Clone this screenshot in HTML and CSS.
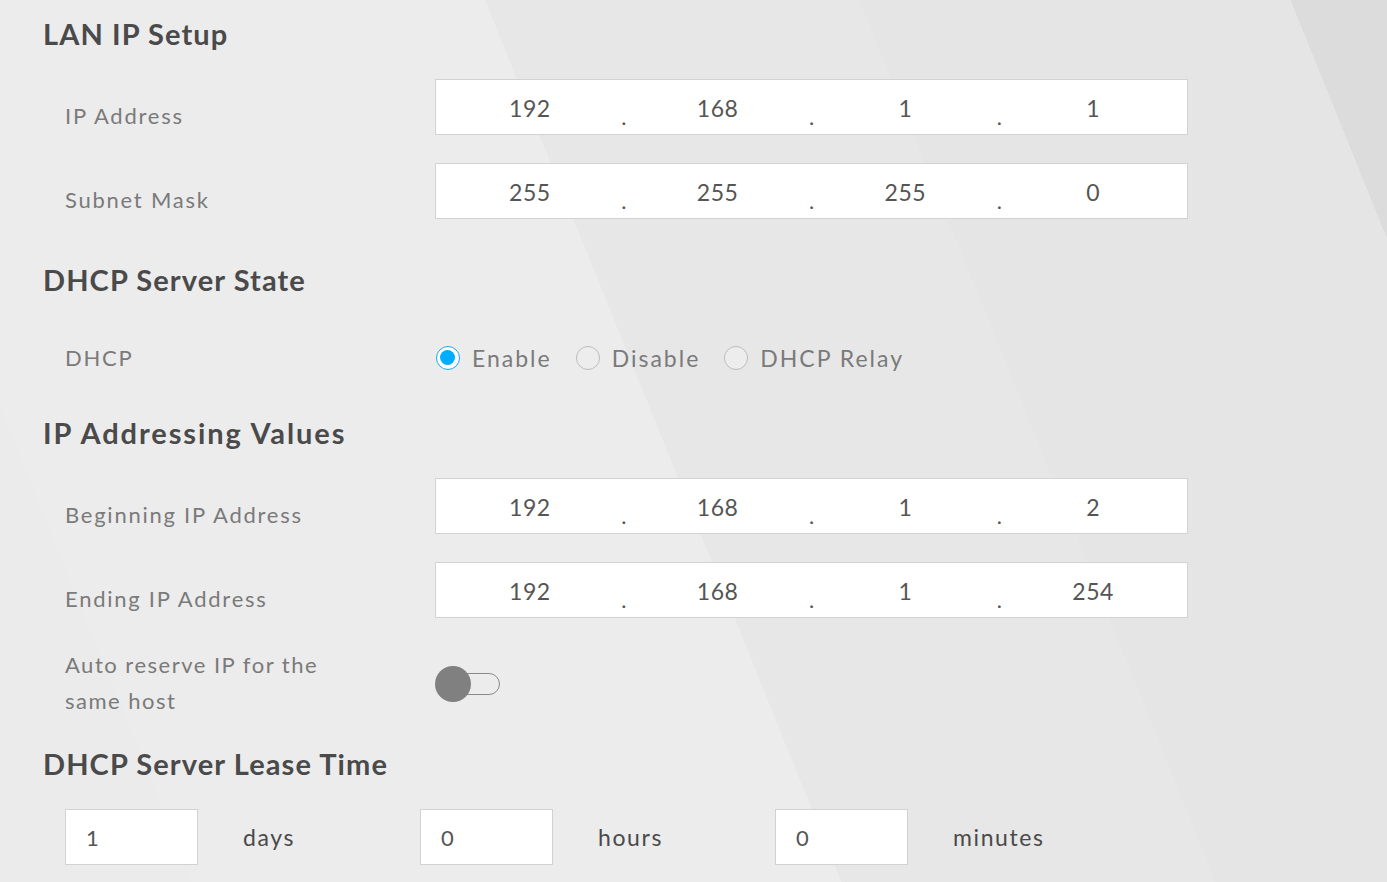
FILE: index.html
```html
<!DOCTYPE html>
<html lang="en">
<head>
<meta charset="utf-8">
<title>LAN IP Setup</title>
<link rel="stylesheet" href="styles.css">
</head>
<body>
<main class="page">
  <h2 class="section-title">LAN IP Setup</h2>

  <div class="form-row first">
    <label class="field-label">IP Address</label>
    <div class="ip-box">
      <span class="octet">192</span><span class="dot">.</span>
      <span class="octet">168</span><span class="dot">.</span>
      <span class="octet">1</span><span class="dot">.</span>
      <span class="octet">1</span>
    </div>
  </div>
  <div class="form-row">
    <label class="field-label">Subnet Mask</label>
    <div class="ip-box">
      <span class="octet">255</span><span class="dot">.</span>
      <span class="octet">255</span><span class="dot">.</span>
      <span class="octet">255</span><span class="dot">.</span>
      <span class="octet">0</span>
    </div>
  </div>

  <h2 class="section-title t2">DHCP Server State</h2>
  <div class="radio-row">
    <label class="field-label plain">DHCP</label>
    <div class="radio-group">
      <span class="radio checked"></span><span class="radio-text">Enable</span>
      <span class="radio"></span><span class="radio-text">Disable</span>
      <span class="radio"></span><span class="radio-text">DHCP Relay</span>
    </div>
  </div>

  <h2 class="section-title t3 wide">IP Addressing Values</h2>
  <div class="form-row first">
    <label class="field-label">Beginning IP Address</label>
    <div class="ip-box">
      <span class="octet">192</span><span class="dot">.</span>
      <span class="octet">168</span><span class="dot">.</span>
      <span class="octet">1</span><span class="dot">.</span>
      <span class="octet">2</span>
    </div>
  </div>
  <div class="form-row">
    <label class="field-label">Ending IP Address</label>
    <div class="ip-box">
      <span class="octet">192</span><span class="dot">.</span>
      <span class="octet">168</span><span class="dot">.</span>
      <span class="octet">1</span><span class="dot">.</span>
      <span class="octet">254</span>
    </div>
  </div>
  <div class="toggle-row">
    <label class="field-label plain wrap">Auto reserve IP for the same host</label>
    <span class="toggle"><span class="knob"></span></span>
  </div>

  <h2 class="section-title t4">DHCP Server Lease Time</h2>
  <div class="lease-row">
    <div class="lease-item"><span class="lease-box">1</span><span class="lease-unit">days</span></div>
    <div class="lease-item"><span class="lease-box">0</span><span class="lease-unit">hours</span></div>
    <div class="lease-item"><span class="lease-box">0</span><span class="lease-unit">minutes</span></div>
  </div>
</main>
</body>
</html>
```

FILE: styles.css
```css
html, body {
  margin: 0;
  padding: 0;
  height: 100%;
}
body {
  font-family: "Lato", "Open Sans", sans-serif;
  background:
    linear-gradient(68deg,
      #ebebeb 0 178px,
      #ececec 178px 780px,
      #e7e7e7 780px 1127px,
      #e5e5e5 1127px 1527px,
      #dcdcdc 1527px);
  overflow: hidden;
}
.page {
  padding: 14px 0 0 43px;
}
.section-title {
  margin: 0;
  font-size: 29px;
  line-height: 40px;
  font-weight: 700;
  letter-spacing: 1.1px;
  color: #4a4a4a;
}
.section-title.wide { letter-spacing: 1.9px; }
.t2 { margin-top: 41px; }
.t3 { margin-top: 35px; }
.t4 { margin-top: 25px; }

.form-row {
  display: flex;
  align-items: flex-start;
  margin-top: 28px;
}
.form-row.first { margin-top: 25px; }

.field-label {
  width: 370px;
  padding-left: 22px;
  padding-top: 24px;
  font-size: 22px;
  line-height: 26px;
  letter-spacing: 1.75px;
  color: #7a7a7a;
  flex: none;
}
.field-label.plain { padding-top: 0; }
.field-label.wrap {
  width: 300px;
  margin-right: 70px;
  line-height: 36px;
  letter-spacing: 1.5px;
}

.ip-box {
  width: 751px;
  height: 54px;
  background: #fff;
  border: 1px solid #d2d2d2;
  display: grid;
  grid-template-columns: 1fr 0 1fr 0 1fr 0 1fr;
  align-items: center;
}
.octet {
  text-align: center;
  font-size: 23px;
  letter-spacing: 0.6px;
  color: #555;
  padding-top: 2px;
}
.dot {
  width: 0;
  align-self: stretch;
  display: flex;
  justify-content: center;
  align-items: flex-end;
  font-size: 22px;
  line-height: 1;
  color: #555;
  padding-bottom: 6px;
  box-sizing: border-box;
}

.radio-row {
  display: flex;
  align-items: center;
  height: 40px;
  margin-top: 38px;
}
.radio-group {
  display: flex;
  align-items: center;
  margin-left: 1px;
}
.radio {
  width: 24px;
  height: 24px;
  box-sizing: border-box;
  border-radius: 50%;
  border: 1px solid #bcbcbc;
  background: #ededed;
  flex: none;
  position: relative;
}
.radio.checked {
  border: 1.5px solid #17a9f2;
  background: #fff;
}
.radio.checked::after {
  content: "";
  position: absolute;
  left: 3px;
  top: 3px;
  width: 15px;
  height: 15px;
  border-radius: 50%;
  background: #00aeff;
}
.radio-text {
  font-size: 23px;
  letter-spacing: 2px;
  color: #7a7a7a;
  margin-left: 12px;
  margin-right: 24px;
}

.toggle-row {
  display: flex;
  align-items: center;
  margin-top: 29px;
}
.toggle {
  position: relative;
  width: 60px;
  height: 22px;
  box-sizing: border-box;
  border: 1px solid #8a8a8a;
  border-radius: 11px;
  margin-left: 5px;
  margin-top: 2px;
}
.knob {
  position: absolute;
  left: -6px;
  top: -8px;
  width: 36px;
  height: 36px;
  border-radius: 50%;
  background: #808080;
}

.lease-row {
  display: flex;
  margin-top: 25px;
  padding-left: 22px;
}
.lease-item {
  width: 355px;
  display: flex;
  align-items: center;
}
.lease-box {
  width: 131px;
  height: 54px;
  box-sizing: content-box;
  background: #fff;
  border: 1px solid #d2d2d2;
  display: flex;
  align-items: center;
  text-indent: 20px;
  font-size: 22px;
  color: #555;
}
.lease-unit {
  margin-left: 45px;
  font-size: 23px;
  letter-spacing: 1.6px;
  color: #4a4a4a;
}
```
